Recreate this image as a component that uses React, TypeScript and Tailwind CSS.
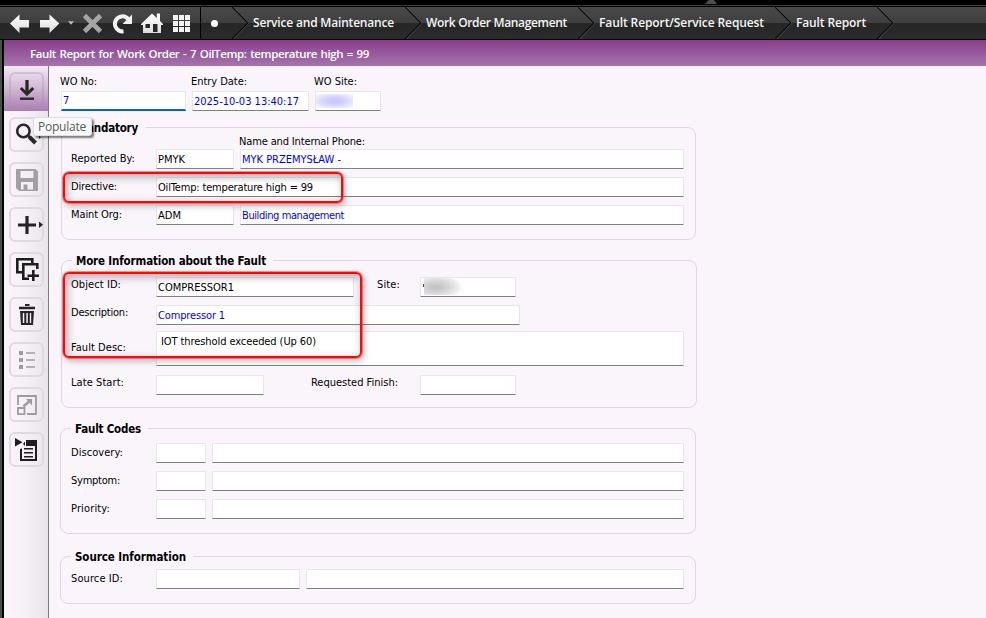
import { useLayoutEffect, useRef, useState, type ReactNode } from 'react';

/** Text that is spaced out to fill an exact width. */
function Fit({ w, children, className = '' }: { w: number; children: string; className?: string }) {
  const ref = useRef<HTMLSpanElement>(null);
  const [spacing, setSpacing] = useState(0);
  useLayoutEffect(() => {
    if (ref.current) {
      const natural = ref.current.getBoundingClientRect().width;
      setSpacing((w - natural) / children.length);
    }
  }, [w, children]);
  return (
    <span ref={ref} className={`inline-block whitespace-pre ${className}`} style={{ letterSpacing: `${spacing}px` }}>
      {children}
    </span>
  );
}

function Field({ className, children }: { className: string; children?: ReactNode }) {
  return (
    <div
      className={`flex shrink-0 items-center rounded-[1px] border border-[#e8e6e9] border-b-[#808080] bg-white ${className}`}
    >
      {children}
    </div>
  );
}

function Value({ w, children }: { w: number; children: string }) {
  return (
    <div className="pl-px pt-[2px]">
      <Fit w={w}>{children}</Fit>
    </div>
  );
}

function Label({ w, children, box = 'w-[85px]' }: { w: number; children: string; box?: string }) {
  return (
    <div className={`shrink-0 leading-[20px] ${box}`}>
      <Fit w={w}>{children}</Fit>
    </div>
  );
}

function Group({ title, w, className, legend, children }: { title: string; w: number; className: string; legend: string; children: ReactNode }) {
  return (
    <fieldset className={`min-w-0 rounded-[8px] border border-[#e6d2e8] ${className}`}>
      <legend className={`h-[15px] text-[11.5px] font-bold leading-[17px] ${legend}`}>
        <Fit w={w}>{title}</Fit>
      </legend>
      {children}
    </fieldset>
  );
}

function Chevron() {
  return (
    <svg className="h-8 w-[17px] shrink-0" viewBox="0 0 17 32" fill="none">
      <path d="M1.5 0 17 16 1.5 32" stroke="#5a5a5a" />
      <path d="M0 0 16 16 0 32" stroke="#0a0a0a" strokeWidth="1.2" />
    </svg>
  );
}

function Crumb({ w, box, children }: { w: number; box: string; children: string }) {
  return (
    <>
      <div className={`shrink-0 pl-1 ${box}`}>
        <Fit w={w}>{children}</Fit>
      </div>
      <Chevron />
    </>
  );
}

function ToolIcons() {
  return (
    <svg className="h-8 w-[196px] shrink-0" viewBox="4 7 196 32">
      <defs>
        <linearGradient id="light" x1="0" y1="0" x2="0" y2="1">
          <stop offset="0" stopColor="#ffffff" />
          <stop offset="1" stopColor="#dcdcdc" />
        </linearGradient>
      </defs>
      <path d="M10 23.500 19.500 14.500V20H29V27.500H19.500V33Z" fill="url(#light)" />
      <path d="M59.300 23.500 49.500 14.500V20H40V27.500H49.500V33Z" fill="url(#light)" />
      <path d="M68 21.200H74L71 24.800Z" fill="#bdbdbd" />
      <path d="M84.500 15.500 100.500 31.500M100.500 15.500 84.500 31.500" stroke="#a5a5a5" strokeWidth="4.600" />
      <path d="M123.500 31.300A7.500 7.500 0 1 1 128.300 19.200" stroke="#f2f2f2" strokeWidth="4" fill="none" />
      <path d="M132 14.500V24H122.500Z" fill="#f2f2f2" />
      <path d="M141 24 152 13.500 156.800 18V13.500H160V21L163 24V25H161V33H143V25H141ZM145.500 24V28H150V24ZM153 24V32H157.500V24Z" fill="url(#light)" fillRule="evenodd" />
      {[0, 1, 2].map((r) =>
        [0, 1, 2].map((c) => (
          <rect key={`${r}-${c}`} x={173 + c * 6} y={15 + r * 6} width="5" height="5" fill="#f3f3f3" />
        )),
      )}
    </svg>
  );
}

const icons: ReactNode[] = [
  <g key="populate" fill="none" stroke="#2b2729">
    <path d="M17 8V22" strokeWidth="3.300" />
    <path d="M10.800 16 17 22.200 23.200 16" strokeWidth="3" />
    <path d="M10 26.700H24" strokeWidth="2.400" />
  </g>,
  <g key="search" fill="none" stroke="#2b2729">
    <circle cx="13.400" cy="14" r="6.200" strokeWidth="2.600" />
    <path d="M17.800 18.400 20 20.500" strokeWidth="3" />
    <path d="M19.500 20 25.500 26" strokeWidth="4" />
    <path d="M29 18.500V22L31 20.200Z" fill="#2b2729" stroke="none" />
  </g>,
  <path key="save" d="M6 7H25.500L28 9.500V29H9L6 26ZM10.500 9V16H23.500V9ZM11 20V27.500H13.500V22.500H17.500V27.500H23V20Z" fill="#a19fa1" fillRule="evenodd" />,
  <g key="new" fill="#242424">
    <path d="M8 16.400H26V19.600H8ZM15.400 9H18.600V27H15.400Z" />
    <path d="M29 14.500V21L33 17.700Z" />
  </g>,
  <g key="duplicate" fill="none" stroke="#1d1d1d" strokeWidth="2.600">
    <path d="M12 20.300H7.300V7.300H22.300V11" />
    <path d="M19 26.700H13.300V12.300H27.300V17" />
    <path d="M17.500 23.700H29M23.300 18V29" />
  </g>,
  <g key="delete" fill="#242424">
    <path d="M15 7H19.500V9H15ZM9 9.700H25V12.300H9Z" />
    <path d="M10 14H24L23 28H11ZM12.800 16V26H14.300V16ZM16.300 16V26H17.800V16ZM19.800 16V26H21.200V16Z" fillRule="evenodd" />
  </g>,
  <g key="list" fill="#9e9b9e">
    {[9, 16, 23].map((y) => (
      <path key={y} d={`M9 ${y}h4v4h-4zM16 ${y + 1.3}h9v1.400h-9z`} />
    ))}
  </g>,
  <g key="detach" fill="none" stroke="#9e9b9e" strokeWidth="1.800">
    <path d="M8 18V9H26V27H17" />
    <path d="M8 21H14.500V27.200H8Z" />
    <path d="M13.500 19.500 19 14.500" strokeWidth="2.500" />
    <path d="M16 12H22V18.500Z" fill="#9e9b9e" stroke="none" />
  </g>,
  <g key="rmb" fill="#1d1d1d">
    <path d="M16 8H27V29H10V17L12 16.500V27H25V14H16Z" />
    <path d="M14 16H23V17.500H14ZM14 20H23V21.500H14ZM14 24H23V25.500H14Z" />
    <path d="M5 6 12.500 10.300 5 14.500ZM13 12 15 9.500V14Z" />
  </g>,
];

function Sidebar() {
  return (
    <aside className="flex w-[45px] shrink-0 flex-col border-r border-[#7d7b7d] bg-linear-to-r from-[#f9f5fa] via-[#f5f0f5] to-[#e9e4e9]">
      {icons.map((icon, i) => (
        <div
          key={i}
          className={`h-[45px] shrink-0 pl-[5px] pt-[6px] ${i === 0 ? 'bg-linear-to-b from-[#f2e9f3] via-[#d2b7d6] to-[#aa7db2]' : ''}`}
        >
          <div
            className={`h-[35px] w-[35px] rounded-[6px] border-2 ${i === 0 ? 'border-[#a890ac]/35' : 'border-[#dedade]'}`}
          >
            <svg className="-ml-[1px] -mt-[2px] h-[35px] w-[35px]" viewBox="0 0 35 35">
              {icon}
            </svg>
          </div>
        </div>
      ))}
    </aside>
  );
}

function Highlight({ className }: { className: string }) {
  return (
    <div
      className={`absolute rounded-[6px] border-2 border-[#fa0808] shadow-[0_0_0_1px_rgba(240,60,60,0.55),2px_3px_6px_rgba(70,60,70,0.35),inset_2px_3px_9px_rgba(70,60,70,0.4)] ${className}`}
    />
  );
}

export default function App() {
  return (
    <div className="relative flex h-[618px] w-[986px] flex-col overflow-hidden bg-[#faf5fb] text-[11px] text-black [font-family:'DejaVu_Sans_Condensed','DejaVu_Sans',sans-serif] [font-stretch:condensed]">
      <header className="shrink-0 bg-black text-[12px] font-semibold text-[#f4f4f4] [font-family:'Open_Sans',sans-serif] [font-stretch:normal]">
        <div className="flex h-[6px] items-start border-b border-[#3c3c3c] pl-[705px]">
          <svg className="h-1 w-3" viewBox="0 0 12 4">
            <path d="M3.500 0H9L12 4H0Z" fill="#4d4d4d" />
          </svg>
        </div>
        <div className="mt-px flex h-8 items-center bg-[linear-gradient(#494949,#3f3f3f_50%,#262626_50%,#2b2b2b)] pl-1">
          <ToolIcons />
          <div className="flex h-8 w-8 shrink-0 items-center border-l border-black pl-[10px]">
            <div className="size-[7px] rounded-full bg-white" />
          </div>
          <Chevron />
          <Crumb w={141} box="w-[156px]">Service and Maintenance</Crumb>
          <Crumb w={141} box="w-[156px]">Work Order Management</Crumb>
          <Crumb w={165} box="w-[180px]">Fault Report/Service Request</Crumb>
          <Crumb w={70} box="w-[85px]">Fault Report</Crumb>
        </div>
      </header>

      <div className="flex min-h-0 grow border-t border-black">
        <div className="w-1 shrink-0 border-r-2 border-black bg-[#4c4c4c]" />
        <div className="flex min-w-0 grow flex-col">
          <div className="flex h-[26px] shrink-0 items-center bg-linear-to-b from-[#863f8b] to-[#a673ac] pl-[26px] pt-px text-[11.5px] font-semibold text-white [word-spacing:1px] [font-family:'Open_Sans',sans-serif] [font-stretch:normal]">
            <Fit w={339}>Fault Report for Work Order - 7 OilTemp: temperature high = 99</Fit>
          </div>

          <div className="flex min-h-0 grow">
            <Sidebar />
            <main className="flex min-w-0 grow flex-col pl-[11px] pt-[6px]">
              <div className="flex shrink-0 gap-[6px] pl-px">
                <div>
                  <Label w={37} box="h-[19px] -ml-px">WO No:</Label>
                  <div className="flex h-5 w-[125px] items-center border border-b-2 border-[#e8e6e9] border-b-[#0067c0] bg-white text-[#0000f0]">
                    <Value w={7}>7</Value>
                  </div>
                </div>
                <div>
                  <Label w={56} box="h-[19px] -ml-px">Entry Date:</Label>
                  <Field className="h-5 w-[117px] text-[#0000f0]">
                    <Value w={105}>2025-10-03 13:40:17</Value>
                  </Field>
                </div>
                <div>
                  <Label w={43} box="h-[19px] -ml-px">WO Site:</Label>
                  <Field className="h-5 w-[66px]">
                    <div className="h-[14px] w-[37px] bg-[radial-gradient(ellipse,#cbc9fc_20%,#e0dffd_60%,#fafaff)]" />
                  </Field>
                </div>
              </div>

              <Group title="Mandatory" w={61} className="ml-px mt-[9px] h-[120px] w-[635px] shrink-0 pl-[9px]" legend="ml-px w-[74px] pl-[5px]">
                <div className="-mt-px h-[15px] pl-[168px] leading-[15px]">
                  <Fit w={126}>Name and Internal Phone:</Fit>
                </div>
                <div className="flex flex-col gap-2">
                  <div className="flex">
                    <Label w={64}>Reported By:</Label>
                    <Field className="h-5 w-[78px]"><Value w={27}>PMYK</Value></Field>
                    <Field className="ml-[6px] h-5 w-[444px] text-[#0000f0]"><Value w={99}>MYK PRZEMYSŁAW -</Value></Field>
                  </div>
                  <div className="flex">
                    <Label w={46}>Directive:</Label>
                    <Field className="h-5 w-[528px]"><Value w={155}>OilTemp: temperature high = 99</Value></Field>
                  </div>
                  <div className="flex">
                    <Label w={51}>Maint Org:</Label>
                    <Field className="h-5 w-[78px]"><Value w={23}>ADM</Value></Field>
                    <Field className="ml-[6px] h-5 w-[444px] text-[#0000f0]"><Value w={102}>Building management</Value></Field>
                  </div>
                </div>
              </Group>

              <Group title="More Information about the Fault" w={190} className="ml-px mt-[13px] h-[155px] w-[636px] shrink-0 pl-[9px]" legend="ml-px w-[201px] pl-[4px]">
                <div className="mt-[9px] flex h-5">
                  <Label w={50} box="w-[85px] -mt-[2px]">Object ID:</Label>
                  <Field className="h-5 w-[198px]"><Value w={76}>COMPRESSOR1</Value></Field>
                  <Label w={23} box="ml-[23px] w-[43px] -mt-[2px]">Site:</Label>
                  <Field className="h-5 w-[96px] items-start pl-[2px]">
                    <div className="mt-[6px] h-[3px] w-px bg-[#6b3b3b]" />
                    <div className="h-[17px] w-[40px] bg-[radial-gradient(ellipse_26px_12px_at_12px_9px,#c4c4c6_15%,#d9d9db_55%,#f4f4f5_95%,#fcfcfc)]" />
                  </Field>
                </div>
                <div className="mt-2 flex h-5">
                  <Label w={57} box="w-[85px] -mt-[2px]">Description:</Label>
                  <Field className="h-5 w-[364px] text-[#0000f0]"><Value w={67}>Compressor 1</Value></Field>
                </div>
                <div className="mt-[6px] flex h-[35px]">
                  <Label w={55} box="w-[85px] mt-[7px]">Fault Desc:</Label>
                  <Field className="h-[35px] w-[528px] pb-[15px] pl-[3px]"><Value w={155}>IOT threshold exceeded (Up 60)</Value></Field>
                </div>
                <div className="mt-[9px] flex h-5">
                  <Label w={53} box="w-[85px] -mt-[2px]">Late Start:</Label>
                  <Field className="h-5 w-[108px]" />
                  <Label w={87} box="ml-[47px] w-[109px] -mt-[2px]">Requested Finish:</Label>
                  <Field className="h-5 w-[96px]" />
                </div>
              </Group>

              <Group title="Fault Codes" w={66} className="mt-[13px] h-[113px] w-[636px] shrink-0 pl-[10px]" legend="w-[77px] pl-[4px]">
                <div className="mt-[7px] flex flex-col gap-2">
                  {[
                    { text: 'Discovery:', w: 52 },
                    { text: 'Symptom:', w: 49 },
                    { text: 'Priority:', w: 39 },
                  ].map((row) => (
                    <div key={row.text} className="flex">
                      <Label w={row.w}>{row.text}</Label>
                      <Field className="h-5 w-[50px]" />
                      <Field className="ml-[6px] h-5 w-[472px]" />
                    </div>
                  ))}
                </div>
              </Group>

              <Group title="Source Information" w={111} className="mt-[15px] h-[55px] w-[636px] shrink-0 pl-[10px]" legend="w-[122px] pl-[4px]">
                <div className="mt-[5px] flex">
                  <Label w={52}>Source ID:</Label>
                  <Field className="h-5 w-[144px]" />
                  <Field className="ml-[6px] h-5 w-[378px]" />
                </div>
              </Group>
            </main>
          </div>
        </div>
      </div>

      <Highlight className="left-[63px] top-[172px] h-[31px] w-[280px]" />
      <Highlight className="left-[63px] top-[272px] h-[86px] w-[299px]" />
      <div className="absolute left-[33px] top-[117px] flex h-[19px] w-[59px] items-center rounded-[3px] border border-[#e0dde0] bg-[#f9f9f9] pl-[4px] text-[12px] text-[#5c5c5c] shadow-[2px_2px_2px_rgba(0,0,0,0.5)] [font-family:'Open_Sans',sans-serif] [font-stretch:normal]">
        <Fit w={48}>Populate</Fit>
      </div>
    </div>
  );
}
